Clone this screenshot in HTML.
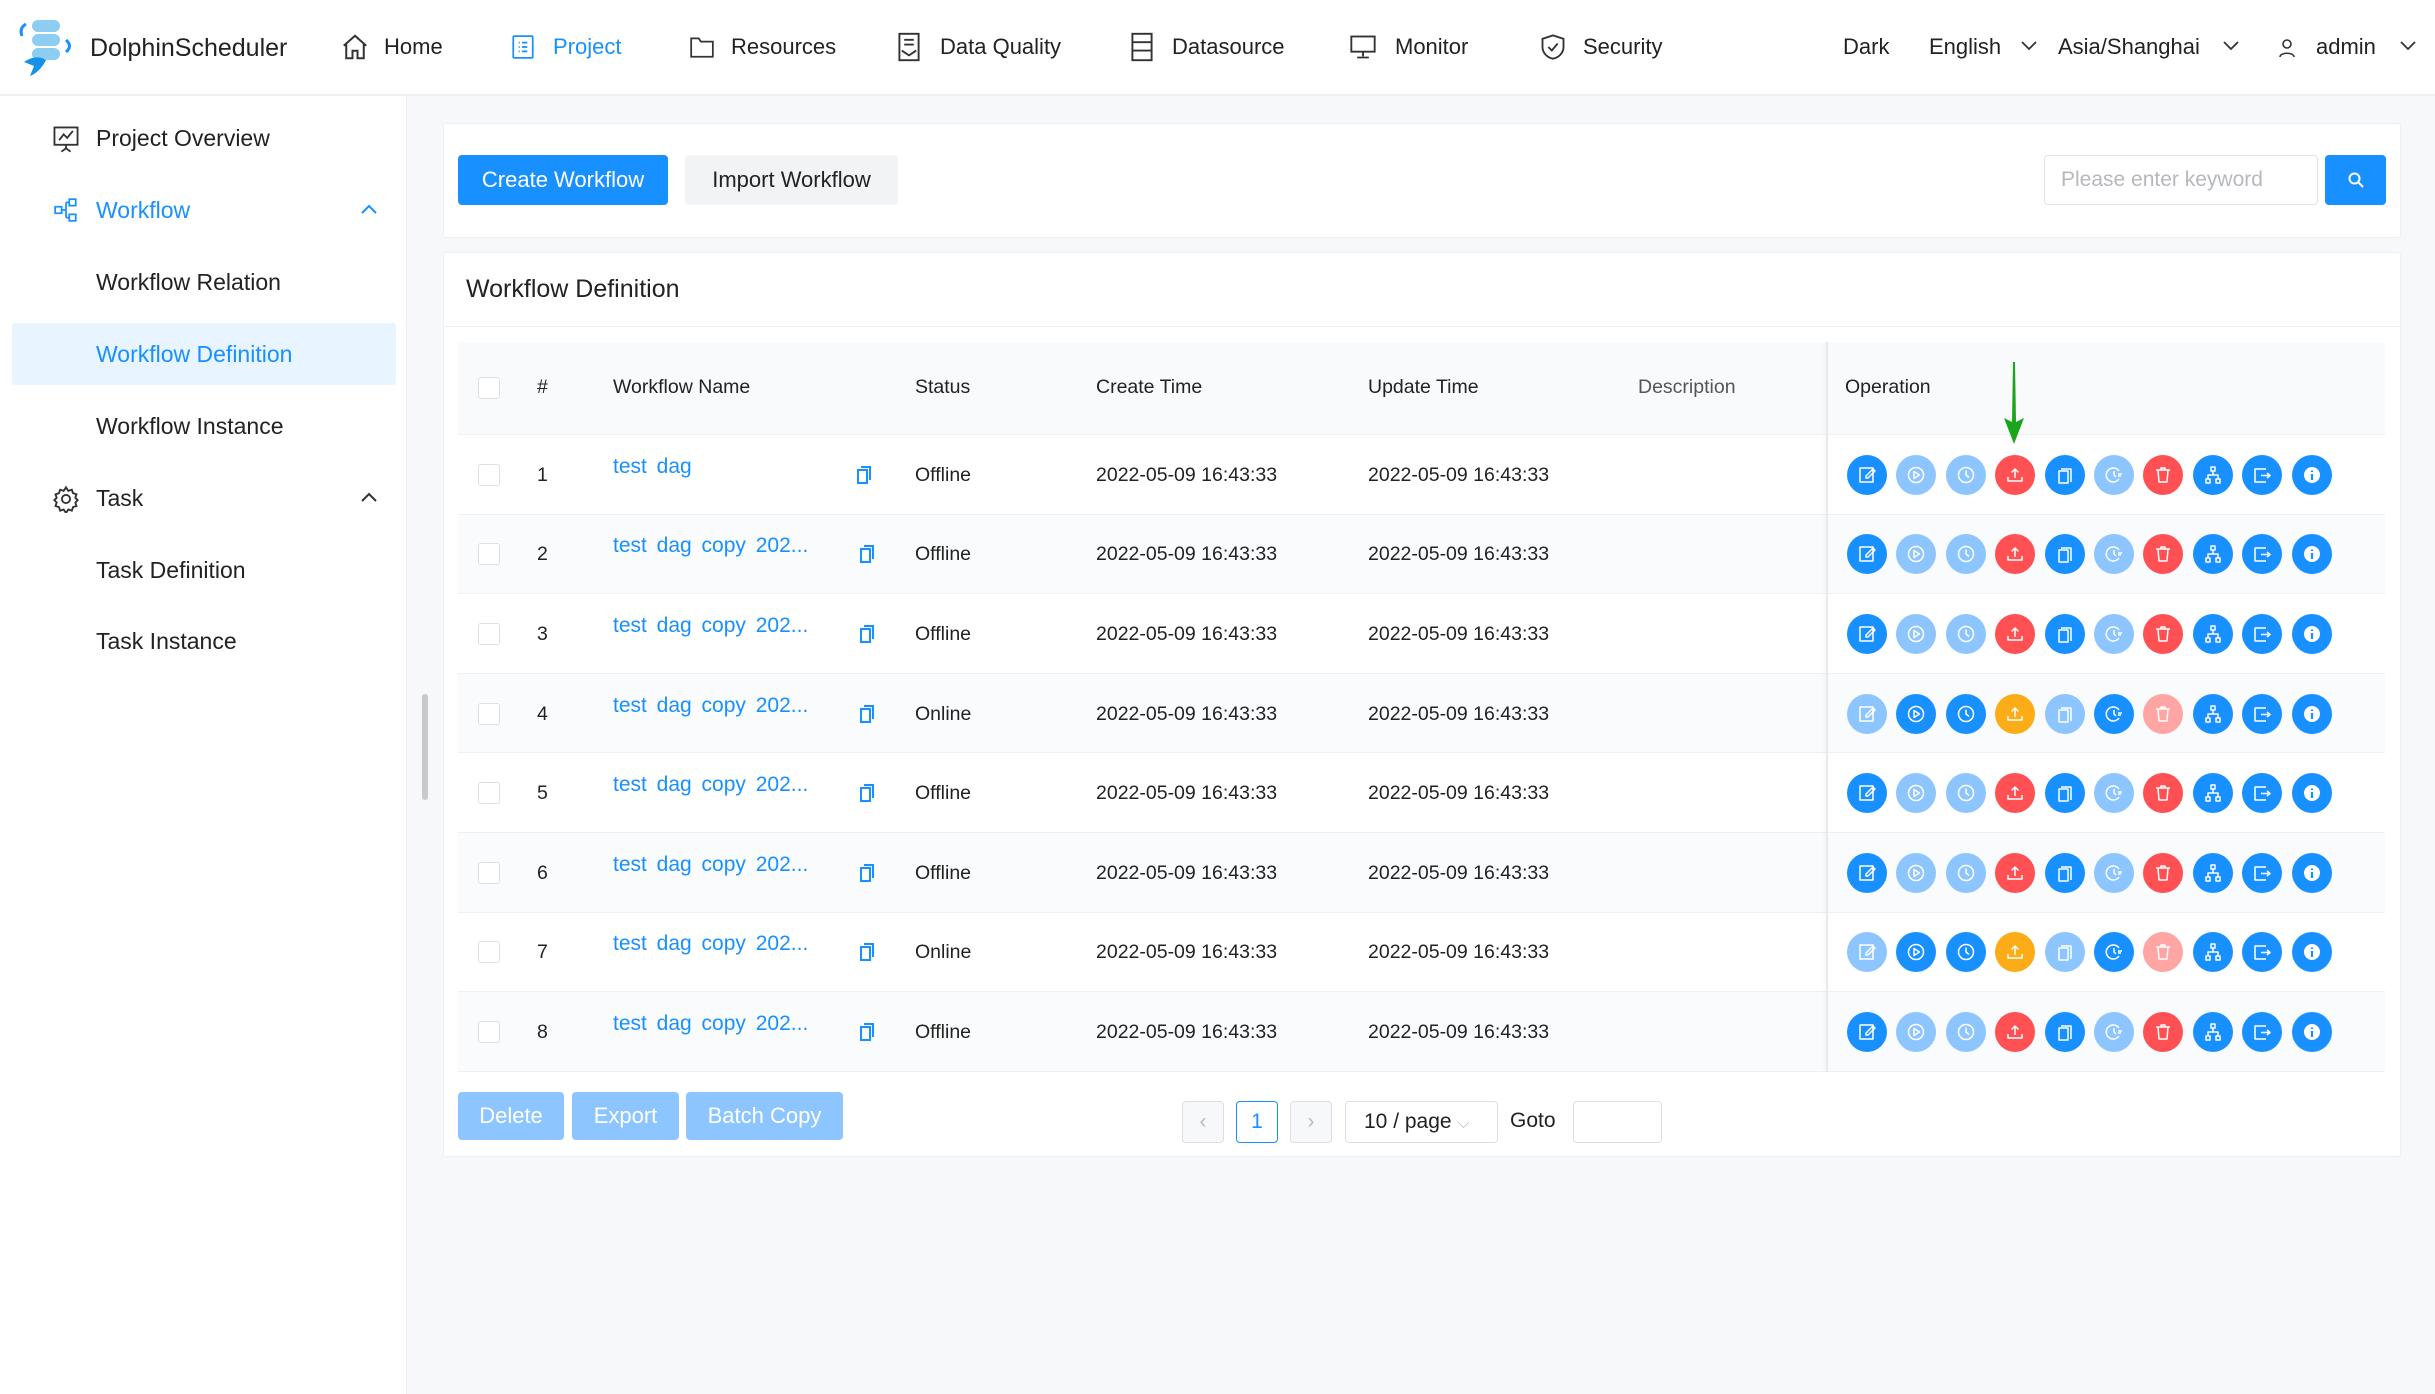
<!DOCTYPE html>
<html><head><meta charset="utf-8"><style>
*{box-sizing:border-box;margin:0;padding:0}
body{width:2435px;height:1394px;position:relative;overflow:hidden;background:#f7f8fa;font-family:"Liberation Sans",sans-serif;color:#1f2225}
.a{position:absolute}
.hdr{left:0;top:0;width:2435px;height:96px;background:#fff;border-bottom:2px solid #eef0f3}
.nav{font-size:22px;top:34px;color:#222}
.side{left:0;top:96px;width:407px;height:1298px;background:#fff;border-right:1px solid #eee}
.si{font-size:23px;color:#222}
.card{background:#fff;border:1px solid #eef0f3;border-radius:3px}
.btn{border-radius:4px;font-size:22px;text-align:center;line-height:50px}
.th{font-size:19.5px;top:376px;color:#222}
.td{font-size:19.5px;color:#222}
.lnk{font-size:21px;color:#1890ff;word-spacing:4px}
.ob{width:40px;height:40px;border-radius:50%;display:flex;align-items:center;justify-content:center}
.B{background:#1890ff}.L{background:#8cc5ff}.R{background:#ff5054}.O{background:#fbac17}.P{background:#ffa5a3}
.cb{width:22px;height:22px;border:1.5px solid #dcdfe6;border-radius:3px;background:#fff}
.pg{border:1.5px solid #dcdfe6;border-radius:4px;height:42px;top:1101px;background:#fff;font-size:21px;text-align:center;line-height:40px}
</style></head><body>
<div class="a hdr"></div>
<svg class="a" style="left:16px;top:18px" width="72" height="62" viewBox="0 0 72 62">
<rect x="16" y="2" width="28" height="12" rx="6" fill="#8ccdf1"/>
<rect x="16" y="16" width="28" height="12" rx="6" fill="#8ccdf1"/>
<rect x="16" y="30" width="28" height="12" rx="6" fill="#8ccdf1"/>
<path d="M10 6 Q3 10 6 18" stroke="#1890ff" stroke-width="3" fill="none"/>
<path d="M50 22 Q57 28 50 34" stroke="#1890ff" stroke-width="3" fill="none"/>
<path d="M8 44 Q20 36 30 42 Q24 54 14 58 L18 48 Z" fill="#1592e6"/>
</svg>
<div class="a" style="left:90px;top:34px;font-size:25px;color:#222">DolphinScheduler</div>
<svg class="a" style="left:340px;top:32px" width="30" height="30" viewBox="0 0 24 24" fill="none" stroke="#333" stroke-width="1.6"><path d="M3 11L12 3l9 8M5 9v12h5v-6h4v6h5V9"/></svg>
<div class="a nav" style="left:384px">Home</div>
<svg class="a" style="left:510px;top:33px" width="26" height="28" viewBox="0 0 24 24" fill="none" stroke="#1890ff" stroke-width="1.6"><rect x="3" y="2" width="18" height="20" rx="1"/><path d="M8 8h1M11 8h5M8 12h1M11 12h5M8 16h1M11 16h5"/></svg>
<div class="a nav" style="left:553px;color:#1890ff">Project</div>
<svg class="a" style="left:688px;top:34px" width="28" height="26" viewBox="0 0 24 24" fill="none" stroke="#333" stroke-width="1.6"><path d="M2 4h7l2 3h11v14H2z"/></svg>
<div class="a nav" style="left:731px">Resources</div>
<svg class="a" style="left:897px;top:32px" width="24" height="30" viewBox="0 0 20 24" fill="none" stroke="#333" stroke-width="1.6"><rect x="2" y="1" width="16" height="22"/><path d="M6 6h8M6 10h8M4 15l6 4 6-4"/></svg>
<div class="a nav" style="left:940px">Data Quality</div>
<svg class="a" style="left:1130px;top:32px" width="24" height="30" viewBox="0 0 20 24" fill="none" stroke="#333" stroke-width="1.6"><rect x="2" y="1" width="16" height="22"/><path d="M2 8h16M2 15h16"/></svg>
<div class="a nav" style="left:1172px">Datasource</div>
<svg class="a" style="left:1348px;top:33px" width="30" height="28" viewBox="0 0 24 24" fill="none" stroke="#333" stroke-width="1.6"><rect x="2" y="3" width="20" height="13"/><path d="M12 16v4M7 21h10"/></svg>
<div class="a nav" style="left:1395px">Monitor</div>
<svg class="a" style="left:1539px;top:32px" width="28" height="30" viewBox="0 0 24 24" fill="none" stroke="#333" stroke-width="1.6"><path d="M12 2l9 3v7c0 5-4 9-9 10-5-1-9-5-9-10V5z"/><path d="M8 12l3 3 5-6"/></svg>
<div class="a nav" style="left:1583px">Security</div>
<div class="a nav" style="left:1843px">Dark</div>
<div class="a nav" style="left:1929px">English</div>
<svg class="a" style="left:2020px;top:40px" width="18" height="12" viewBox="0 0 18 12" fill="none" stroke="#333" stroke-width="1.8"><path d="M2 2l7 7 7-7"/></svg>
<div class="a nav" style="left:2058px">Asia/Shanghai</div>
<svg class="a" style="left:2222px;top:40px" width="18" height="12" viewBox="0 0 18 12" fill="none" stroke="#333" stroke-width="1.8"><path d="M2 2l7 7 7-7"/></svg>
<svg class="a" style="left:2277px;top:37px" width="20" height="22" viewBox="0 0 20 22" fill="none" stroke="#333" stroke-width="1.6"><circle cx="10" cy="7" r="4"/><path d="M3 20c0-5 14-5 14 0"/></svg>
<div class="a nav" style="left:2316px">admin</div>
<svg class="a" style="left:2399px;top:40px" width="18" height="12" viewBox="0 0 18 12" fill="none" stroke="#333" stroke-width="1.8"><path d="M2 2l7 7 7-7"/></svg>

<div class="a side"></div>
<svg class="a" style="left:52px;top:124px" width="28" height="30" viewBox="0 0 24 26" fill="none" stroke="#333" stroke-width="1.6"><rect x="2" y="3" width="20" height="15"/><path d="M6 14l4-5 3 3 5-6M12 18v3M8 24l4-3 4 3"/></svg>
<div class="a si" style="left:96px;top:125px">Project Overview</div>
<svg class="a" style="left:52px;top:197px" width="28" height="26" viewBox="0 0 24 24" fill="none" stroke="#1890ff" stroke-width="1.6"><rect x="2" y="9" width="6" height="6"/><rect x="15" y="2" width="6" height="6"/><rect x="15" y="16" width="6" height="6"/><path d="M8 12h4M12 5v14M12 5h3M12 19h3"/></svg>
<div class="a si" style="left:96px;top:197px;color:#1890ff">Workflow</div>
<svg class="a" style="left:360px;top:203px" width="18" height="12" viewBox="0 0 18 12" fill="none" stroke="#1890ff" stroke-width="2"><path d="M2 10l7-7 7 7"/></svg>
<div class="a si" style="left:96px;top:269px">Workflow Relation</div>
<div class="a" style="left:12px;top:323px;width:384px;height:62px;background:#e8f4ff;border-radius:3px"></div>
<div class="a si" style="left:96px;top:341px;color:#1890ff">Workflow Definition</div>
<div class="a si" style="left:96px;top:413px">Workflow Instance</div>
<svg class="a" style="left:52px;top:485px" width="28" height="28" viewBox="0 0 24 24" fill="none" stroke="#333" stroke-width="1.6"><circle cx="12" cy="12" r="3.5"/><path d="M12 2l2 3 3-1 1 3 3 1-1 3 2 2-2 2 1 3-3 1-1 3-3-1-2 3-2-3-3 1-1-3-3-1 1-3-2-2 2-2-1-3 3-1 1-3 3 1z"/></svg>
<div class="a si" style="left:96px;top:485px">Task</div>
<svg class="a" style="left:360px;top:491px" width="18" height="12" viewBox="0 0 18 12" fill="none" stroke="#333" stroke-width="2"><path d="M2 10l7-7 7 7"/></svg>
<div class="a si" style="left:96px;top:557px">Task Definition</div>
<div class="a si" style="left:96px;top:628px">Task Instance</div>
<div class="a" style="left:422px;top:694px;width:6px;height:106px;background:#c9c9c9;border-radius:3px"></div>

<div class="a card" style="left:443px;top:123px;width:1958px;height:115px"></div>
<div class="a btn" style="left:458px;top:155px;width:210px;height:50px;background:#1890ff;color:#fff">Create Workflow</div>
<div class="a btn" style="left:685px;top:155px;width:213px;height:50px;background:#f2f3f5;color:#222">Import Workflow</div>
<div class="a" style="left:2044px;top:155px;width:274px;height:50px;border:1.5px solid #e0e2e7;border-radius:4px;font-size:21px;color:#b5b8bd;padding:12px 16px">Please enter keyword</div>
<div class="a" style="left:2325px;top:155px;width:61px;height:50px;background:#1890ff;border-radius:4px"></div>
<svg class="a" style="left:2347px;top:171px" width="18" height="18" viewBox="0 0 18 18" fill="none" stroke="#fff" stroke-width="2"><circle cx="7.5" cy="7.5" r="5"/><path d="M11 11l5 5"/></svg>

<div class="a card" style="left:443px;top:252px;width:1958px;height:905px"></div>
<div class="a" style="left:466px;top:275px;font-size:25px;color:#222">Workflow Definition</div>
<div class="a" style="left:444px;top:326px;width:1956px;height:1px;background:#eef0f3"></div>
<div class="a" style="left:458px;top:342px;width:1927px;height:93px;background:#f9fafc;border-bottom:1px solid #eef0f3"></div>
<div class="a cb" style="left:478px;top:377px"></div>
<div class="a th" style="left:537px">#</div>
<div class="a th" style="left:613px">Workflow Name</div>
<div class="a th" style="left:915px">Status</div>
<div class="a th" style="left:1096px">Create Time</div>
<div class="a th" style="left:1368px">Update Time</div>
<div class="a th" style="left:1638px;color:#555">Description</div>
<div class="a th" style="left:1845px">Operation</div>

<div id="rows"></div>
<div class="a" style="left:1826px;top:342px;width:2px;height:730px;background:#e8e9ec;box-shadow:-2px 0 4px rgba(0,0,0,.05)"></div>

<svg class="a" style="left:2001px;top:362px" width="26" height="84" viewBox="0 0 26 84"><path d="M12 0L14 0L15 60L23 56L13 82L3 56L11 60Z" fill="#1aa51a"/></svg>

<div class="a btn" style="left:458px;top:1092px;width:106px;height:48px;line-height:48px;background:#8cc5ff;color:#fff">Delete</div>
<div class="a btn" style="left:572px;top:1092px;width:107px;height:48px;line-height:48px;background:#8cc5ff;color:#fff">Export</div>
<div class="a btn" style="left:686px;top:1092px;width:157px;height:48px;line-height:48px;background:#8cc5ff;color:#fff">Batch Copy</div>
<div class="a pg" style="left:1182px;width:42px;background:#f7f8fa;color:#bbb">‹</div>
<div class="a pg" style="left:1236px;width:42px;border-color:#1890ff;color:#1890ff">1</div>
<div class="a pg" style="left:1290px;width:42px;background:#f7f8fa;color:#bbb">›</div>
<div class="a pg" style="left:1345px;width:153px;text-align:left;padding-left:18px;color:#222">10 / page <span style="color:#bbb;font-size:16px">⌵</span></div>
<div class="a" style="left:1510px;top:1109px;font-size:21px">Goto</div>
<div class="a pg" style="left:1573px;width:89px"></div>

<script>
const icons={
e:'<rect x="3" y="3" width="13" height="14"/><path d="M9 11l7-7 2 2-7 7H9z"/>',
p:'<circle cx="10" cy="10" r="7.5"/><path d="M8 6.5v7l5.5-3.5z"/>',
c:'<circle cx="10" cy="10" r="7.5"/><path d="M10 5.5V10l3 2.5"/>',
u:'<path d="M10 13V4M6.5 7.5L10 4l3.5 3.5M3 12v4h14v-4"/>',
y:'<path d="M6 4h10v13M4 6h9v12H4z"/>',
t:'<path d="M15 6A7 7 0 1 0 15 14M10 6v4l2 2M14 9h4M14 11h3"/>',
d:'<path d="M3 5h14M8 5V3h4v2M5 5l1 12h8l1-12"/>',
r:'<rect x="8" y="2" width="4" height="4"/><rect x="3" y="14" width="4" height="4"/><rect x="13" y="14" width="4" height="4"/><path d="M10 6v4M5 14v-4h10v4"/>',
x:'<path d="M14 4H3v13h11M9 10.5h9M15 8l3 2.5L15 13"/>',
i:'<circle cx="10" cy="10" r="8" fill="#fff" stroke="none"/><path d="M10 9v6M10 5.5v1.5" stroke="#1890ff" stroke-width="2.2"/>'
};
const order=['e','p','c','u','y','t','d','r','x','i'];
const off=['B','L','L','R','B','L','R','B','B','B'];
const on=['L','B','B','O','L','B','P','B','B','B'];
let h='';
for(let k=0;k<8;k++){
 const top=435+k*79.6, cy=top+39.8, online=(k==3||k==6);
 h+=`<div class="a" style="left:458px;top:${top}px;width:1927px;height:79.6px;background:${k%2?'#fafbfc':'#fff'};border-bottom:1px solid #eef0f3"></div>`;
 h+=`<div class="a cb" style="left:478px;top:${cy-11}px"></div>`;
 h+=`<div class="a td" style="left:537px;top:${cy-11}px">${k+1}</div>`;
 h+=`<div class="a lnk" style="left:613px;top:${cy-20}px">${k==0?'test dag':'test dag copy 202...'}</div>`;
 h+=`<svg class="a" style="left:${k==0?856:859}px;top:${cy-10}px" width="16" height="20" viewBox="0 0 16 20" fill="none" stroke="#1890ff" stroke-width="2"><path d="M5 2h9v13M2 5h9v13H2z"/></svg>`;
 h+=`<div class="a td" style="left:915px;top:${cy-11}px">${online?'Online':'Offline'}</div>`;
 h+=`<div class="a td" style="left:1096px;top:${cy-11}px">2022-05-09 16:43:33</div>`;
 h+=`<div class="a td" style="left:1368px;top:${cy-11}px">2022-05-09 16:43:33</div>`;
 const cols=online?on:off;
 order.forEach((o,j)=>{
  h+=`<div class="a ob ${cols[j]}" style="left:${1847+j*49.4}px;top:${cy-20}px"><svg width="20" height="20" viewBox="0 0 20 20" fill="none" stroke="#fff" stroke-width="1.5" stroke-linejoin="round">${icons[o]}</svg></div>`;
 });
}
document.getElementById('rows').innerHTML=h;
</script>
</body></html>
